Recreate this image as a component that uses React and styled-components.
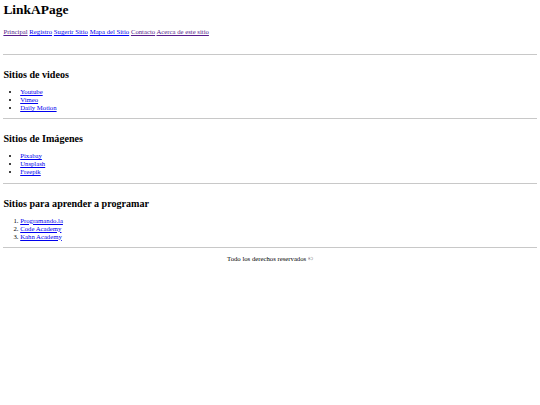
import React from "react";
import styled, { createGlobalStyle } from "styled-components";

const Global = createGlobalStyle`
  html, body { background: #fff; }
  body {
    margin: 0 3.4px 3.4px;
    font-family: "Liberation Serif", "Times New Roman", serif;
    font-size: 6.72px;
    line-height: 7.6px;
    color: #000;
  }
`;

const Header = styled.header`
  padding-top: 1.75px;
`;

const Title = styled.h1`
  font-size: 13.44px;
  line-height: 15.5px;
  font-weight: bold;
  margin: 0 0 11px;
`;

const Nav = styled.nav`
  margin: 0 0 18.2px;
`;

const Link = styled.a`
  color: ${(p) => (p.$visited ? "#551a8b" : "#0000ee")};
  text-decoration: underline;
`;

const Rule = styled.hr`
  margin: 0;
  border: none;
  border-top: 1px solid #c8c8c8;
  height: 0;
`;

const Section = styled.section``;

const Heading = styled.h2`
  font-size: 10.08px;
  line-height: 11.6px;
  font-weight: bold;
  margin: 14px 0 7.5px;
`;

const List = styled.ul`
  margin: 0 0 6.25px;
  padding-left: 16.8px;
  line-height: 8px;
  list-style: ${(p) => (p.$ordered ? "decimal" : "disc")};
`;

const Footer = styled.footer`
  text-align: center;
  margin: 7.3px 0;
`;

const navLinks = [
  ["Principal", true],
  ["Registro", false],
  ["Sugerir Sitio", false],
  ["Mapa del Sitio", false],
  ["Contacto", true],
  ["Acerca de este sitio", true],
];

const sections = [
  { title: "Sitios de videos", items: ["Youtube", "Vimeo", "Daily Motion"] },
  { title: "Sitios de Imágenes", items: ["Pixabay", "Unsplash", "Freepik"] },
  {
    title: "Sitios para aprender a programar",
    items: ["Programando.la", "Code Academy", "Kahn Academy"],
    ordered: true,
  },
];

export default function App() {
  return (
    <>
      <Global />
      <Header>
        <Title>LinkAPage</Title>
        <Nav>
          {navLinks.map(([t, v], i) => (
            <React.Fragment key={t}>
              {i > 0 && " "}
              <Link href="#" $visited={v}>{t}</Link>
            </React.Fragment>
          ))}
        </Nav>
      </Header>
      {sections.map((s) => (
        <Section key={s.title}>
          <Rule />
          <Heading>{s.title}</Heading>
          <List as={s.ordered ? "ol" : "ul"} $ordered={s.ordered}>
            {s.items.map((it) => (
              <li key={it}>
                <Link href="#">{it}</Link>
              </li>
            ))}
          </List>
        </Section>
      ))}
      <Rule />
      <Footer>Todo los derechos reservados ©</Footer>
    </>
  );
}
